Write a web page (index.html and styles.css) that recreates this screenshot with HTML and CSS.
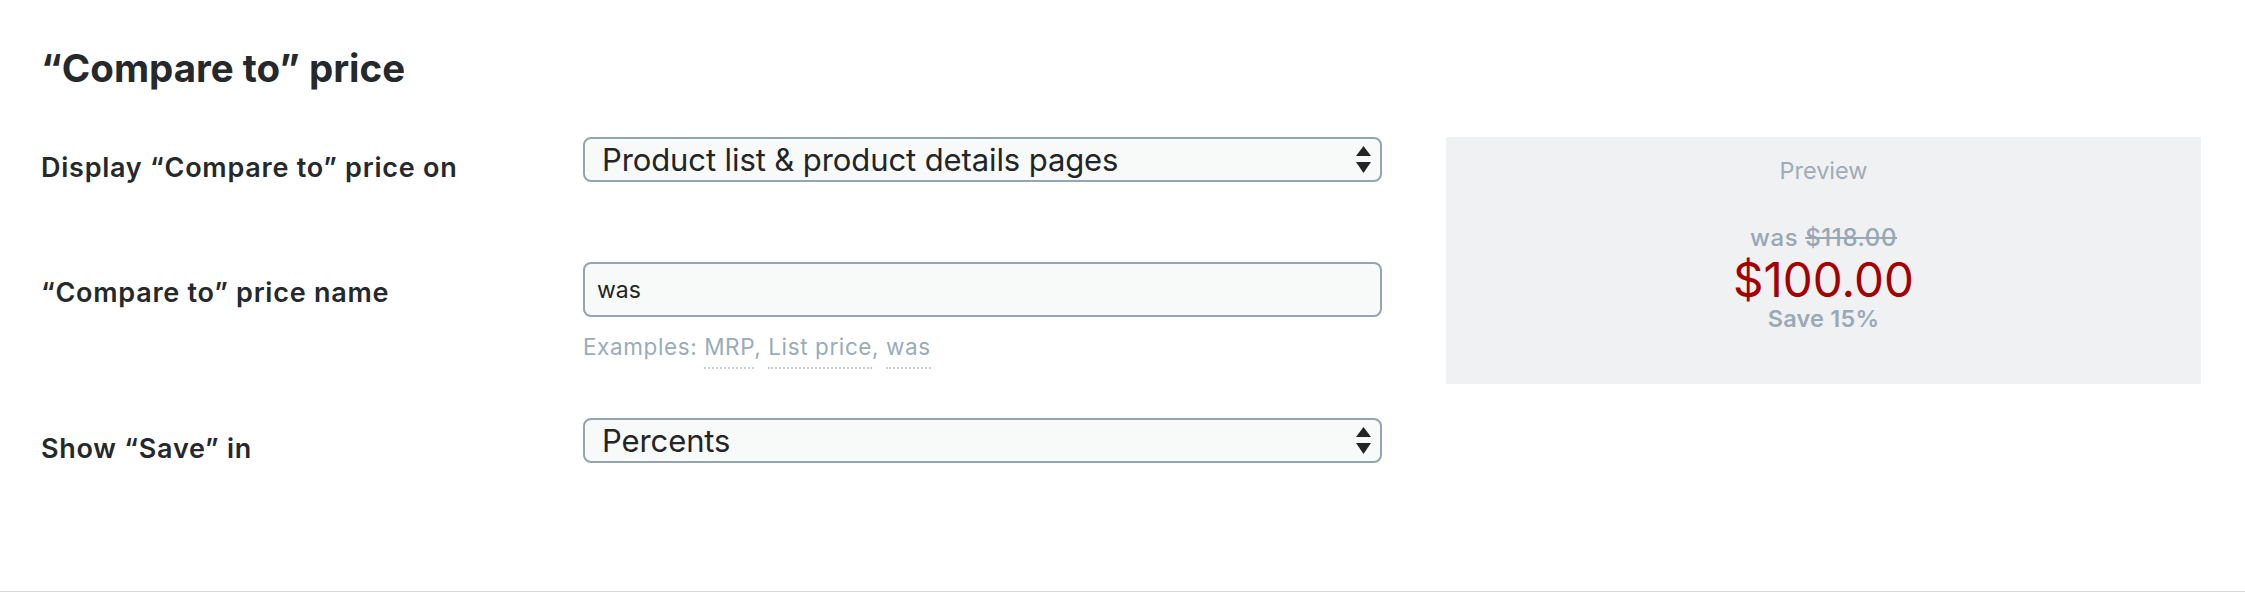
FILE: index.html
```html
<!DOCTYPE html>
<html lang="en">
<head>
<meta charset="utf-8">
<title>“Compare to” price</title>
<link rel="stylesheet" href="styles.css">
</head>
<body>
<main class="page">
  <h2 class="title">“Compare to” price</h2>
  <div class="layout">
    <div class="form">
      <div class="row row-first">
        <div class="label">Display “Compare to” price on</div>
        <div class="control">
          <div class="select">
            <span class="select-value">Product list &amp; product details pages</span>
            <svg class="arrows" width="15" height="27" viewBox="0 0 15 27"><polygon points="7.5,0 15,10 0,10"/><polygon points="0,16 15,16 7.5,27"/></svg>
          </div>
        </div>
      </div>
      <div class="row row-second">
        <div class="label">“Compare to” price name</div>
        <div class="control">
          <div class="input">was</div>
          <div class="hint">Examples: <span class="example">MRP</span>, <span class="example">List price</span>, <span class="example">was</span></div>
        </div>
      </div>
      <div class="row">
        <div class="label">Show “Save” in</div>
        <div class="control">
          <div class="select">
            <span class="select-value">Percents</span>
            <svg class="arrows" width="15" height="27" viewBox="0 0 15 27"><polygon points="7.5,0 15,10 0,10"/><polygon points="0,16 15,16 7.5,27"/></svg>
          </div>
        </div>
      </div>
    </div>
    <aside class="preview">
      <div class="preview-title">Preview</div>
      <div class="old-price">was <s>$118.00</s></div>
      <div class="price">$100.00</div>
      <div class="save">Save 15%</div>
    </aside>
  </div>
</main>
</body>
</html>
```
FILE: styles.css
```css
html, body {
  margin: 0;
  padding: 0;
  background: #ffffff;
}

body {
  font-family: Inter, "Noto Sans", "Liberation Sans", sans-serif;
  color: #25292c;
}

.page {
  box-sizing: border-box;
  min-height: 592px;
  padding: 45px 44px 0 41px;
  border-bottom: 1px solid #d5d8e1;
}

.title {
  margin: 0 0 46px;
  font-size: 38.5px;
  line-height: 46px;
  font-weight: 700;
  color: #25292c;
}

.layout {
  display: flex;
  align-items: flex-start;
}

.form {
  width: 1341px;
  flex: none;
  display: flex;
  flex-direction: column;
}

.row {
  display: grid;
  grid-template-columns: 542px 799px;
}

.row-first {
  margin-bottom: 77px;
}

.row-second {
  margin-bottom: 58px;
}

.label {
  padding-top: 14px;
  font-size: 27px;
  line-height: 34px;
  font-weight: 600;
  letter-spacing: 0.75px;
  color: #25292c;
}

.select {
  box-sizing: border-box;
  height: 45px;
  display: flex;
  align-items: center;
  justify-content: space-between;
  padding: 0 9px 0 17px;
  border: 2px solid #93a4b2;
  border-radius: 8px;
  background: #f8fafa;
}

.select-value {
  font-size: 31px;
  line-height: 40px;
  letter-spacing: -0.1px;
  color: #222426;
}

.arrows {
  display: block;
  fill: #222426;
}

.input {
  box-sizing: border-box;
  height: 55px;
  display: flex;
  align-items: center;
  padding: 0 12px;
  border: 2px solid #93a4b2;
  border-radius: 8px;
  background: #f8fafa;
  font-size: 23px;
  color: #222426;
}

.hint {
  margin-top: 17px;
  font-size: 22.5px;
  line-height: 26px;
  letter-spacing: 0.6px;
  color: #9aabb8;
}

.example {
  padding-bottom: 7px;
  border-bottom: 2px dotted #c6d1d9;
}

.preview {
  flex: 1;
  margin-left: 64px;
  box-sizing: border-box;
  height: 247px;
  padding-top: 20px;
  background: #f0f1f3;
  text-align: center;
}

.preview-title {
  font-size: 23.5px;
  line-height: 28px;
  color: #9eacb7;
  margin-bottom: 36px;
}

.old-price {
  font-size: 24px;
  line-height: 34px;
  font-weight: 500;
  letter-spacing: 0.6px;
  color: #97a7b3;
}

.price {
  font-size: 47.5px;
  line-height: 49px;
  font-weight: 400;
  color: #a50000;
}

.save {
  font-size: 23.5px;
  line-height: 29px;
  font-weight: 600;
  letter-spacing: 0.2px;
  color: #99a9b5;
}
```
